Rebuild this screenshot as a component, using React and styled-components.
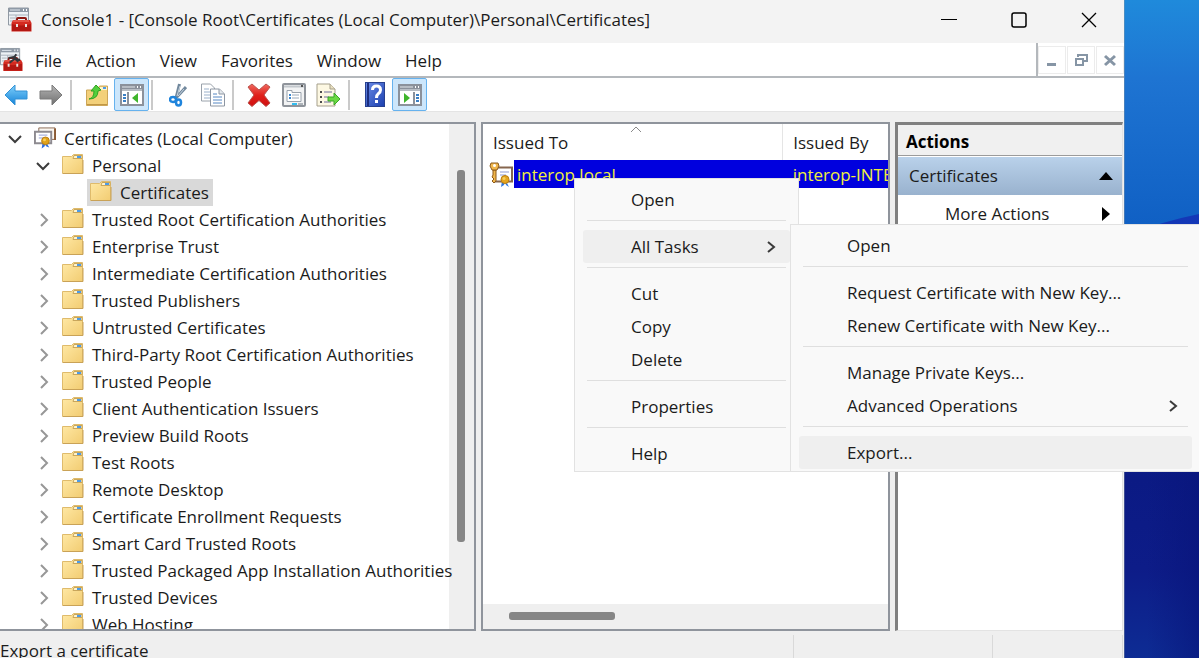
import React from "react";
import styled, { createGlobalStyle, css } from "styled-components";

const Global = createGlobalStyle`
  * { box-sizing: border-box; }
  html, body, #root { height: 100%; }
  body {
    margin: 0;
    overflow: hidden;
    font-family: "Open Sans", "Noto Sans", sans-serif;
    font-size: 17px;
    line-height: 24px;
    color: #1b1b1b;
  }
  button { font: inherit; color: inherit; background: none; border: 0; padding: 0; margin: 0; }
  ul { list-style: none; margin: 0; padding: 0; }
  svg { display: block; flex: none; }
`;

const Screen = styled.div`
  position: relative;
  display: grid;
  grid-template-columns: minmax(0, 1fr) 75px;
  height: 100vh;
  overflow: hidden;
`;

const Desktop = styled.div`
  svg { width: 100%; height: 100%; }
`;

const AppWindow = styled.div`
  display: flex;
  flex-direction: column;
  min-height: 0;
  background: #efefef;
`;

const TitleBar = styled.header`
  display: flex;
  align-items: center;
  height: 43px;
  flex: none;
  padding-left: 8px;
  padding-bottom: 4px;
  gap: 9px;
  background: #f3f3f3;
`;

const Title = styled.h1`
  flex: 1;
  margin: 0;
  font-size: 17px;
  font-weight: 400;
  white-space: nowrap;
`;

const Captions = styled.div`
  display: flex;
`;

const CaptionButton = styled.button`
  display: flex;
  align-items: center;
  justify-content: center;
  width: 70px;
  height: 38px;
`;

const MenuRow = styled.div`
  display: flex;
  height: 35px;
  flex: none;
  background: #fff;
  border-bottom: 2px solid #b4b8bc;
`;

const MenuBar = styled.nav`
  display: flex;
  flex: 1;
  align-items: center;
  border-right: 2px solid #b4b8bc;
`;

const MenuButton = styled.button`
  padding: 2px 12px 0;
`;

const MdiButtons = styled.div`
  display: flex;
  align-items: center;
  gap: 1px;
`;

const MdiButton = styled.button`
  display: flex;
  align-items: center;
  justify-content: center;
  width: 28px;
  height: 28px;
  border: 1px solid #ececec;
`;

const ToolRow = styled.div`
  flex: none;
  background: #fff;
  border-bottom: 1px solid #e4e4e4;
  margin-bottom: 10px;
`;

const Tools = styled.div`
  display: flex;
  align-items: center;
  height: 33px;
  margin-left: -2px;
`;

const ToolButton = styled.button`
  display: flex;
  align-items: center;
  justify-content: center;
  width: 35px;
  height: 33px;
  border: 1px solid transparent;
  border-radius: 2px;
  ${(p) => p.$on && css`
    background: #cce6fb;
    border-color: #66b2ee;
  `}
`;

const ToolSeparator = styled.span`
  width: 2px;
  height: 30px;
  margin: 0 7px 0 2px;
  background: #cacaca;
`;

const Panes = styled.main`
  display: grid;
  grid-template-columns: minmax(0, 476fr) minmax(0, 409fr) minmax(0, 228fr);
  gap: 5px;
  flex: 1;
  min-height: 0;
  padding-right: 1px;
`;

const Pane = styled.section`
  display: flex;
  min-width: 0;
  min-height: 0;
  overflow: hidden;
  flex-direction: ${(p) => (p.$row ? "row" : "column")};
  background: #fff;
  border: 2px solid #8f949c;
  ${(p) => p.$flushLeft && css`border-left: 0;`}
`;

const Tree = styled.ul`
  position: relative;
  z-index: 1;
  flex: 1;
  min-width: 0;
  padding-top: 1px;
`;

const TreeRow = styled.li`
  display: flex;
  align-items: center;
  height: 27px;
  white-space: nowrap;
  padding-left: ${(p) => 8 + p.$level * 28}px;
`;

const Twisty = styled.span`
  width: 23px;
  flex: none;
`;

const NodeLabel = styled.span`
  display: flex;
  align-items: center;
  height: 27px;
  gap: 8px;
  padding: 0 4px 0 3px;
  background: ${(p) => (p.$selected ? "#d9d9d9" : "transparent")};
  svg { margin-bottom: 2px; }
`;

const VScroll = styled.div`
  width: 25px;
  flex: none;
  padding: 46px 9px 0 8px;
  background: #efefef;
`;

const VThumb = styled.div`
  width: 8px;
  height: 81%;
  border-radius: 3px;
  background: #868686;
`;

const HScroll = styled.div`
  margin: auto 0 0 0;
  padding: 8px 0 9px 26px;
  background: #efefef;
`;

const HThumb = styled.div`
  width: 28%;
  height: 8px;
  border-radius: 3px;
  background: #868686;
`;

const Grid = styled.table`
  width: 100%;
  table-layout: fixed;
  border-collapse: collapse;
`;

const HeadCell = styled.th`
  position: relative;
  height: 36px;
  width: ${(p) => p.$width};
  padding: 2px 0 0 10px;
  text-align: left;
  font-weight: 400;
  border-right: ${(p) => (p.$divider ? "1px solid #e5e5e5" : "0")};
  overflow: hidden;
  white-space: nowrap;
`;

const SortMark = styled.span`
  position: absolute;
  top: 1px;
  left: 49%;
`;

const Cell = styled.td`
  height: 28px;
  padding: 1px 0 0 ${(p) => (p.$first ? 6 : 10)}px;
  overflow: hidden;
  white-space: nowrap;
  color: #f0f03c;
  background: ${(p) => (p.$first ? "linear-gradient(90deg, #fff 31px, #0000de 31px)" : "#0000de")};
`;

const CellContent = styled.span`
  display: flex;
  align-items: center;
  gap: 4px;
`;

const ActionsPane = styled.aside`
  min-width: 0;
  background: #fff;
  border: 1px solid #e3e3e3;
  border-top: 3px solid #808080;
  border-left: 3px solid #808080;
`;

const ActionsTitle = styled.h2`
  margin: 0 0 1px;
  height: 31px;
  padding: 5px 8px 0;
  font-size: 17px;
  line-height: 24px;
  font-weight: 700;
  color: #000;
  background: #f0f0f0;
  border-bottom: 1px solid #9b9b9b;
`;

const ActionButton = styled.button`
  display: flex;
  align-items: center;
  justify-content: space-between;
  width: 100%;
  height: 38px;
  padding: 0 ${(p) => (p.$group ? 9 : 12)}px 0 ${(p) => (p.$group ? 11 : 47)}px;
  white-space: nowrap;
  background: ${(p) => (p.$group ? "linear-gradient(#b9d1ea, #99b2ce)" : "#fff")};
`;

const StatusBar = styled.footer`
  display: flex;
  height: 27px;
  flex: none;
  overflow: hidden;
  padding: 4px 1px 0 0;
`;

const StatusCell = styled.div`
  flex: ${(p) => p.$grow} 1 0;
  padding-top: 4px;
  border-right: 1px solid #d9d9d9;
  white-space: nowrap;
`;

const Popup = styled.div`
  position: absolute;
  width: ${(p) => p.$width}px;
  padding: 4px 8px 1px;
  background: #f9f9f9;
  border: 1px solid #e2e2e2;
`;

const ContextMenu = styled(Popup)`
  left: 574px;
  top: 178px;
`;

const SubMenu = styled(Popup)`
  left: 100%;
  top: -6px;
  padding-bottom: 2px;
`;

const ItemWrap = styled.div`
  position: relative;
`;

const Item = styled.button`
  display: flex;
  align-items: center;
  justify-content: space-between;
  width: 100%;
  height: 33px;
  padding: 0 14px 0 48px;
  white-space: nowrap;
  border-radius: 3px;
  background: ${(p) => (p.$active ? "#efefef" : "transparent")};
`;

const Rule = styled.hr`
  height: 1px;
  margin: 4px 4px 9px;
  border: 0;
  background: #dfdfdf;
`;

const Chevron = ({ open }) => (
  <svg width="14" height="14" viewBox="0 0 14 14" fill="none" strokeWidth="2" stroke={open ? "#3c3c3c" : "#979797"}>
    <path d={open ? "M1 4l6 6 6-6" : "M5 1l6 6-6 6"} />
  </svg>
);

const MenuArrow = () => (
  <svg width="10" height="14" viewBox="0 0 10 14" fill="none" stroke="#3a3a3a" strokeWidth="2">
    <path d="M2 2l6 5-6 5" />
  </svg>
);

const Folder = () => (
  <svg width="22" height="21" viewBox="0 0 22 21">
    <defs>
      <linearGradient id="folder" x1="0" y1="0" x2="1" y2="1">
        <stop offset="0" stopColor="#ffe9a6" />
        <stop offset="1" stopColor="#f2cc72" />
      </linearGradient>
    </defs>
    <path d="M.5 2.5h9l2-2h9v19H.5z" fill="url(#folder)" stroke="#dfbb6c" />
    <path d="M11 4.5l1-3h8v3z" fill="#fff4cd" stroke="#c9a65b" />
    <rect x="15" y="2" width="4" height="2" fill="#4c9be8" />
    <path d="M1 19.5h20V6" fill="none" stroke="#c9a257" />
  </svg>
);

const CertStore = () => (
  <svg width="22" height="23" viewBox="0 0 23 23">
    <path d="M5 1.5h17v12H5z" fill="#faf6f0" stroke="#8a6a55" />
    <path d="M22 2v12" stroke="#8b5a33" strokeWidth="2" />
    <path d="M1 5.5h17v12H1z" fill="#fff" stroke="#8d8a90" strokeWidth="2" />
    <path d="M5 9h9M5 12h5" stroke="#8f9bd4" />
    <path d="M9 17l-1 6 3-2 1-3zM13 17l3 5-3-1-2-3z" fill="#2f6fe0" />
    <circle cx="12" cy="15" r="4" fill="#e0a21a" stroke="#b97d10" />
    <circle cx="11" cy="14" r="1.5" fill="#f7cf5c" />
  </svg>
);

const CertKey = () => (
  <svg width="24" height="26" viewBox="0 0 24 26">
    <path d="M5 5.5h18v14H5z" fill="#fff" stroke="#86664f" strokeWidth="2" />
    <path d="M11 10h9M11 13h6" stroke="#8f9bd4" />
    <path d="M4 8h3v11l-2 2-2-2 2-2-2-2 1-2z" fill="#f0b64b" stroke="#8c5a1c" />
    <path d="M2 1h7l1 3-2 4H3L1 4z" fill="#f0b64b" stroke="#8c5a1c" />
    <circle cx="5.5" cy="3.5" r="1.5" fill="#fff" />
    <path d="M13 19l-1 6 3-2 1-3zM17 19l3 6-3-2-1-3z" fill="#2f78e0" />
    <circle cx="16" cy="17.5" r="4" fill="#e5a51e" stroke="#b97d10" />
    <circle cx="15" cy="16.5" r="1.5" fill="#f7cf5c" />
  </svg>
);

const Console = ({ tools }) => (
  <svg width={tools ? 23 : 24} height="25" viewBox="0 0 24 25">
    <path d="M.5 1h20v17H.5z" fill="#edf1f5" stroke="#9099a3" />
    <path d="M1 1h19v4H1z" fill="#8f9aa7" />
    <path d="M2 3h10" stroke="#dfe6ed" />
    <path d="M15 3h1M18 3h1" stroke="#fff" strokeWidth="2" />
    <path d="M1 8h19M8 8v9M2 11h5M2 14h5" stroke="#a7b0ba" />
    <path d="M9 14v-2q0-1 1-1h7q1 0 1 1v2" fill="none" stroke="#8d1812" strokeWidth="2" />
    <path d="M5 13h17l1.500 3v8.500h-20V16z" fill="#d42a20" />
    <path d="M4 17q9 3 19 0v7H4z" fill="#b31712" />
    <path d="M5 14h16" stroke="#f0786a" />
    <path d="M8 17h2v3H8zM17 17h2v3h-2z" fill="#e9e3df" />
    {tools && <path d="M17 7l-2 3 2 2 4 1M9 11l5-1 5 5M10 16l5-4" stroke="#33363b" strokeWidth="2" fill="none" />}
  </svg>
);

const Arrow = ({ right }) => (
  <svg width="24" height="22" viewBox="0 0 24 22">
    <defs>
      <linearGradient id={right ? "fwd" : "back"} x1="0" y1="0" x2="0" y2="1">
        <stop offset="0" stopColor={right ? "#b5b5b5" : "#7fd0fb"} />
        <stop offset="1" stopColor={right ? "#6f6f6f" : "#1583d8"} />
      </linearGradient>
    </defs>
    <path
      d={right ? "M1 7h12V1l10 10-10 10v-6H1z" : "M23 7H11V1L1 11l10 10v-6h12z"}
      fill={`url(#${right ? "fwd" : "back"})`}
      stroke={right ? "#7b7b7b" : "#3292d6"}
      strokeLinejoin="round"
    />
  </svg>
);

const FolderUp = () => (
  <svg width="22" height="22" viewBox="0 0 22 22">
    <path d="M.5 6h11l2-4h8v19.500H.5z" fill="#f3d07a" stroke="#cda657" />
    <path d="M14 3h7v3h-7z" fill="#fff3c8" />
    <path d="M17 4h3" stroke="#4c9be8" strokeWidth="2" />
    <path d="M1 20.5h20" stroke="#c19745" />
    <path d="M3 15q5-1 5-8H5l5-6 5 5-3 1q0 8-9 8z" fill="#53cf3c" stroke="#2fa222" />
  </svg>
);

const PaneIcon = ({ right }) => (
  <svg width="24" height="22" viewBox="0 0 24 22">
    <path d="M1 1h22v20H1z" fill="#fff" stroke="#8b919b" strokeWidth="2" />
    <path d="M1 1h22v6H1z" fill="#8b919b" />
    <path d="M2 3h13M2 6h20" stroke="#e4e8ec" />
    <path d="M17 3h1M20 3h1" stroke="#fff" strokeWidth="2" />
    {right ? (
      <>
        <path d="M16 8v13" stroke="#8b919b" strokeWidth="2" />
        <path d="M18 11h3M18 14h3M18 17h3" stroke="#3b7fc4" strokeWidth="2" />
        <path d="M6 9l6 5-6 5z" fill="#3fb52c" />
      </>
    ) : (
      <>
        <path d="M8 8v13" stroke="#8b919b" strokeWidth="2" />
        <path d="M3 11h3M3 14h3M3 17h3" stroke="#3b7fc4" strokeWidth="2" />
        <path d="M18 9l-6 5 6 5z" fill="#3fb52c" />
      </>
    )}
  </svg>
);

const Scissors = () => (
  <svg width="18" height="24" viewBox="0 0 18 24" fill="none">
    <path d="M10.5 1L7 15M17 4L6 16" stroke="#71889d" strokeWidth="3" />
    <path d="M11 3L8 13M15 6l-6 7" stroke="#c9d5df" />
    <ellipse cx="4" cy="16.5" rx="3" ry="2.5" stroke="#1f84dc" strokeWidth="2.5" />
    <ellipse cx="9.5" cy="19.5" rx="2.5" ry="3" stroke="#1f84dc" strokeWidth="2.5" />
  </svg>
);

const CopyIcon = () => (
  <svg width="24" height="24" viewBox="0 0 24 24">
    <path d="M.5 1h9l4 4v13H.5z" fill="#fff" stroke="#9aa2ab" />
    <path d="M3 6h5M3 9h7M3 12h7M3 15h7" stroke="#9bb1cb" />
    <path d="M9.500 6h9l5 5v12h-14z" fill="#fff" stroke="#8d96a2" />
    <path d="M18 6v5h5" fill="#e4e9ee" stroke="#8d96a2" />
    <path d="M12 11h4M12 14h9M12 17h9M12 20h9" stroke="#5688c4" />
  </svg>
);

const Delete = () => (
  <svg width="24" height="24" viewBox="0 0 24 24">
    <defs>
      <linearGradient id="del" x1="0" y1="0" x2="0" y2="1">
        <stop offset="0" stopColor="#f06a60" />
        <stop offset=".5" stopColor="#e0201a" />
        <stop offset="1" stopColor="#d01010" />
      </linearGradient>
    </defs>
    <path d="M1 4l4-3 7 6 7-6 4 3-6 8 6 8-4 3.500-7-6-7 6-4-3.500 6-8z" fill="url(#del)" stroke="#b9534d" strokeLinejoin="round" />
  </svg>
);

const Properties = () => (
  <svg width="24" height="24" viewBox="0 0 24 24">
    <rect x="1" y="1" width="22" height="22" rx="1" fill="#f2f3f4" stroke="#8f949b" strokeWidth="2" />
    <path d="M2 3.500h20" stroke="#c2c7cc" strokeWidth="2" />
    <path d="M19 3h2" stroke="#555" strokeWidth="2" />
    <path d="M5 7.500h5v2h9v9H5z" fill="#fff" stroke="#98a1ab" />
    <path d="M7 12h2M7 15h2" stroke="#3d87cf" strokeWidth="2" />
    <path d="M10 12h7M10 15h7" stroke="#9aa8b8" />
    <path d="M10 21h5" stroke="#33bdf0" strokeWidth="2" />
    <path d="M16 21h5" stroke="#aeb4ba" strokeWidth="2" />
  </svg>
);

const ExportList = () => (
  <svg width="25" height="24" viewBox="0 0 25 24">
    <path d="M1 1h13l5 5v17H1z" fill="#fdf8e3" stroke="#a59f8c" />
    <path d="M14 1v5h5" fill="#e9e0c0" stroke="#a59f8c" />
    <path d="M4 9h2M4 14h2M4 19h2" stroke="#4c4c4c" strokeWidth="2" />
    <path d="M8 9h8M8 14h5M8 19h7" stroke="#6c6c9a" />
    <path d="M12 14h6v-4l6 6-6 6v-4h-6z" fill="#6bd943" stroke="#3ba528" />
  </svg>
);

const HelpBook = () => (
  <svg width="20" height="25" viewBox="0 0 20 25">
    <defs>
      <linearGradient id="book" x1="0" y1="0" x2="1" y2="1">
        <stop offset="0" stopColor="#6b8ce8" />
        <stop offset="1" stopColor="#1b3fae" />
      </linearGradient>
    </defs>
    <rect x=".5" y=".5" width="19" height="24" fill="url(#book)" stroke="#27408f" />
    <path d="M3 1v23" stroke="#1c2f80" strokeWidth="2" />
    <path d="M7.500 8q0-4 4-4t4 4q0 2-2 3.500T11.500 16" fill="none" stroke="#fff" strokeWidth="3" />
    <path d="M10 18h3v3h-3z" fill="#fff" />
  </svg>
);

const branches = [
  "Trusted Root Certification Authorities",
  "Enterprise Trust",
  "Intermediate Certification Authorities",
  "Trusted Publishers",
  "Untrusted Certificates",
  "Third-Party Root Certification Authorities",
  "Trusted People",
  "Client Authentication Issuers",
  "Preview Build Roots",
  "Test Roots",
  "Remote Desktop",
  "Certificate Enrollment Requests",
  "Smart Card Trusted Roots",
  "Trusted Packaged App Installation Authorities",
  "Trusted Devices",
  "Web Hosting",
];

const Node = ({ level, open, leaf, icon, selected, children }) => (
  <TreeRow $level={level}>
    <Twisty>{!leaf && <Chevron open={open} />}</Twisty>
    <NodeLabel $selected={selected}>
      {icon || <Folder />}
      {children}
    </NodeLabel>
  </TreeRow>
);

const tools = [
  ["Back", <Arrow />],
  ["Forward", <Arrow right />],
  null,
  ["Up one level", <FolderUp />],
  ["Show console tree", <PaneIcon />, true],
  null,
  ["Cut", <Scissors />],
  ["Copy", <CopyIcon />],
  null,
  ["Delete", <Delete />],
  ["Properties", <Properties />],
  ["Export list", <ExportList />],
  null,
  ["Help", <HelpBook />],
  ["Show action pane", <PaneIcon right />, true],
];

export default function App() {
  return (
    <>
      <Global />
      <Screen>
        <AppWindow>
          <TitleBar>
            <Console />
            <Title>Console1 - [Console Root\Certificates (Local Computer)\Personal\Certificates]</Title>
            <Captions>
              <CaptionButton aria-label="Minimize">
                <svg width="16" height="16" viewBox="0 0 16 16"><path d="M0 7.500h16" stroke="#000" /></svg>
              </CaptionButton>
              <CaptionButton aria-label="Maximize">
                <svg width="16" height="16" viewBox="0 0 16 16" fill="none"><rect x="1" y="1" width="14" height="14" rx="2" stroke="#000" strokeWidth="1.500" /></svg>
              </CaptionButton>
              <CaptionButton aria-label="Close">
                <svg width="16" height="16" viewBox="0 0 16 16"><path d="M1 1l14 14M15 1L1 15" stroke="#000" strokeWidth="1.300" /></svg>
              </CaptionButton>
            </Captions>
          </TitleBar>
          <MenuRow>
            <MenuBar>
              <Console tools />
              {["File", "Action", "View", "Favorites", "Window", "Help"].map((m) => (
                <MenuButton key={m}>{m}</MenuButton>
              ))}
            </MenuBar>
            <MdiButtons>
              <MdiButton aria-label="Minimize console">
                <svg width="14" height="14" viewBox="0 0 14 14"><path d="M2 10h9v3H2z" fill="#8695a5" /></svg>
              </MdiButton>
              <MdiButton aria-label="Restore console">
                <svg width="14" height="14" viewBox="0 0 14 14" fill="none" stroke="#8695a5">
                  <path d="M4 4V2h9v6h-3" strokeWidth="2" />
                  <path d="M2 6h7v6H2z" strokeWidth="2" />
                </svg>
              </MdiButton>
              <MdiButton aria-label="Close console">
                <svg width="14" height="14" viewBox="0 0 14 14" stroke="#8695a5" strokeWidth="3"><path d="M2 3l10 9M12 3L2 12" /></svg>
              </MdiButton>
            </MdiButtons>
          </MenuRow>
          <ToolRow>
            <Tools>
              {tools.map((t, i) =>
                t ? (
                  <ToolButton key={i} aria-label={t[0]} $on={t[2]}>{t[1]}</ToolButton>
                ) : (
                  <ToolSeparator key={i} />
                )
              )}
            </Tools>
          </ToolRow>
          <Panes>
            <Pane $row $flushLeft>
              <Tree>
                <Node level={0} open icon={<CertStore />}>Certificates (Local Computer)</Node>
                <Node level={1} open>Personal</Node>
                <Node level={2} leaf selected>Certificates</Node>
                {branches.map((b) => (
                  <Node key={b} level={1}>{b}</Node>
                ))}
              </Tree>
              <VScroll><VThumb /></VScroll>
            </Pane>
            <Pane>
              <Grid>
                <thead>
                  <tr>
                    <HeadCell $width="74%" $divider>
                      Issued To
                      <SortMark>
                        <svg width="12" height="8" viewBox="0 0 12 8" fill="none" stroke="#8a8a8a"><path d="M1 7l5-5 5 5" /></svg>
                      </SortMark>
                    </HeadCell>
                    <HeadCell>Issued By</HeadCell>
                  </tr>
                </thead>
                <tbody>
                  <tr>
                    <Cell $first><CellContent><CertKey />interop.local</CellContent></Cell>
                    <Cell>interop-INTEROP-CA</Cell>
                  </tr>
                </tbody>
              </Grid>
              <HScroll><HThumb /></HScroll>
            </Pane>
            <ActionsPane>
              <ActionsTitle>Actions</ActionsTitle>
              <ActionButton $group>
                Certificates
                <svg width="14" height="8" viewBox="0 0 14 8"><path d="M0 8l7-8 7 8z" /></svg>
              </ActionButton>
              <ActionButton>
                More Actions
                <svg width="8" height="14" viewBox="0 0 8 14"><path d="M0 0l8 7-8 7z" /></svg>
              </ActionButton>
            </ActionsPane>
          </Panes>
          <StatusBar>
            <StatusCell $grow={795}>Export a certificate</StatusCell>
            <StatusCell $grow={199} />
            <StatusCell $grow={129} />
          </StatusBar>
        </AppWindow>
        <Desktop>
          <svg viewBox="0 0 75 658" preserveAspectRatio="none">
            <defs>
              <linearGradient id="sky" x1="0" y1="0" x2="0" y2="1">
                <stop offset="0" stopColor="#1f8adb" />
                <stop offset=".12" stopColor="#1e74d2" />
                <stop offset=".34" stopColor="#1060c4" />
              </linearGradient>
              <linearGradient id="deep" x1="0" y1="0" x2="0" y2="1">
                <stop offset="0" stopColor="#1438b8" />
                <stop offset=".6" stopColor="#0b1a84" />
                <stop offset=".8" stopColor="#0d1c88" />
                <stop offset="1" stopColor="#0d2c94" />
              </linearGradient>
              <linearGradient id="shade" x1="0" y1="0" x2="1" y2="0">
                <stop offset=".3" stopColor="#08147a" stopOpacity="0" />
                <stop offset="1" stopColor="#08147a" stopOpacity=".6" />
              </linearGradient>
            </defs>
            <rect width="75" height="658" fill="url(#sky)" />
            <path d="M0 236Q40 221 75 214V658H0z" fill="url(#deep)" />
            <rect y="472" width="75" height="186" fill="url(#shade)" />
            <rect width="1" height="658" fill="#8c98a0" fillOpacity=".4" />
          </svg>
        </Desktop>
        <ContextMenu $width={225} role="menu">
          <Item role="menuitem">Open</Item>
          <Rule />
          <ItemWrap>
            <Item role="menuitem" $active>All Tasks<MenuArrow /></Item>
            <SubMenu $width={411} role="menu">
              <Item role="menuitem">Open</Item>
              <Rule />
              <Item role="menuitem">Request Certificate with New Key...</Item>
              <Item role="menuitem">Renew Certificate with New Key...</Item>
              <Rule />
              <Item role="menuitem">Manage Private Keys...</Item>
              <Item role="menuitem">Advanced Operations<MenuArrow /></Item>
              <Rule />
              <Item role="menuitem" $active>Export...</Item>
            </SubMenu>
          </ItemWrap>
          <Rule />
          <Item role="menuitem">Cut</Item>
          <Item role="menuitem">Copy</Item>
          <Item role="menuitem">Delete</Item>
          <Rule />
          <Item role="menuitem">Properties</Item>
          <Rule />
          <Item role="menuitem">Help</Item>
        </ContextMenu>
      </Screen>
    </>
  );
}
